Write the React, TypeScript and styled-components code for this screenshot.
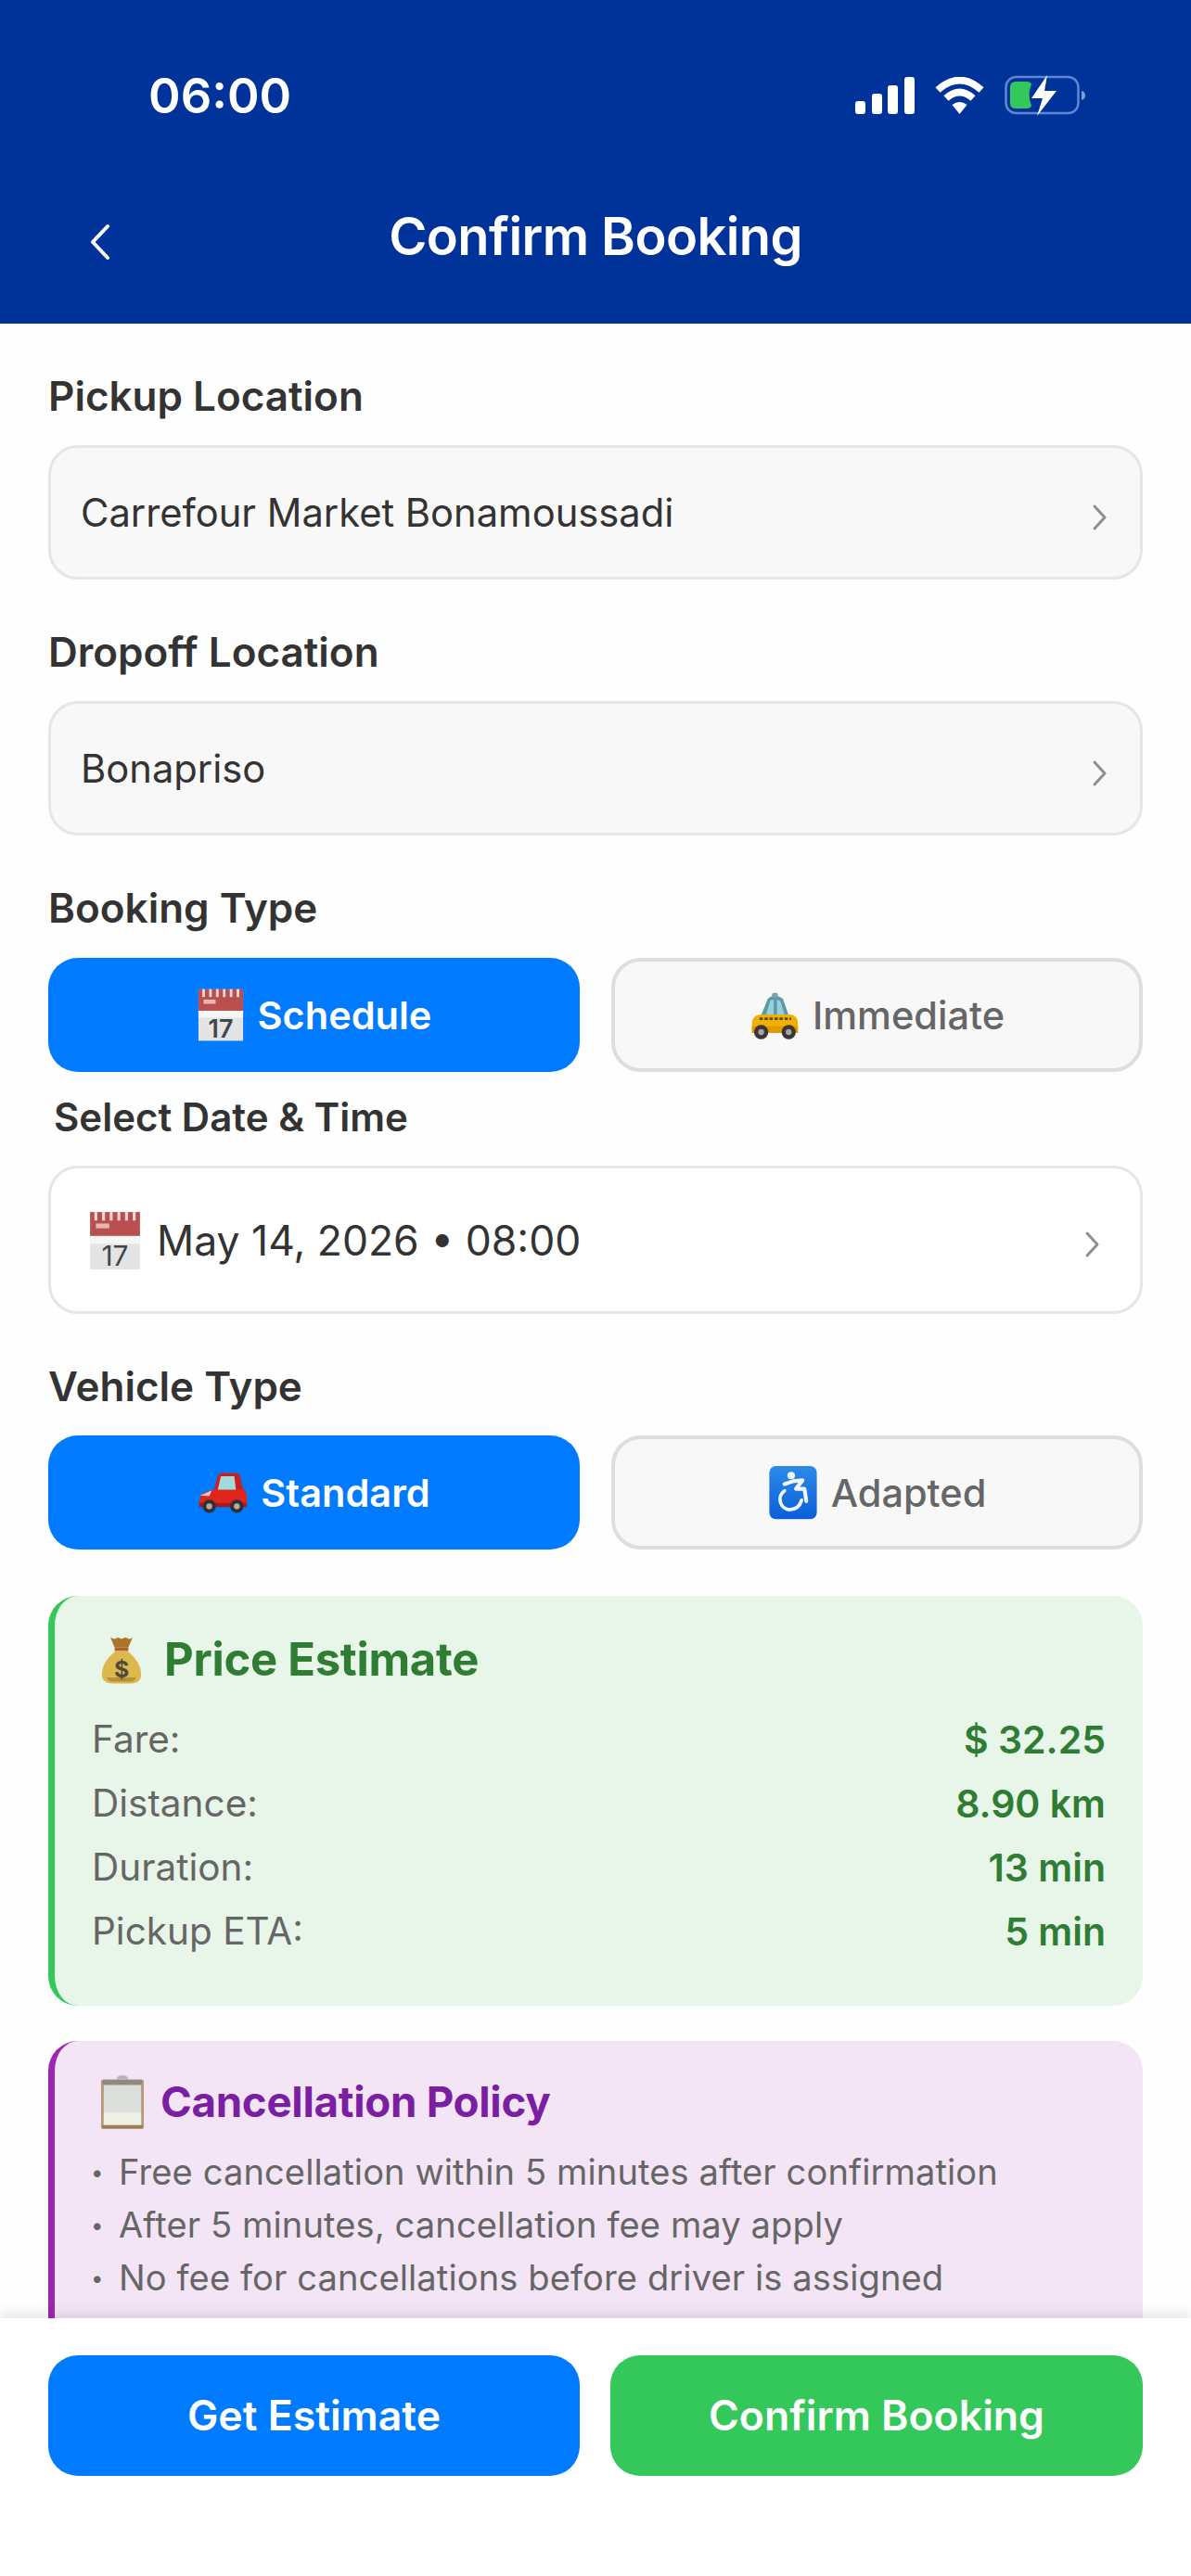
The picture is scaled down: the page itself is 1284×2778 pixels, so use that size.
import React from 'react';
import styled, { createGlobalStyle } from 'styled-components';

const Global = createGlobalStyle`
  html, body { margin: 0; padding: 0; background: #fff; }
  * { box-sizing: border-box; }
  body { font-family: Inter, "Liberation Sans", sans-serif; }
`;

const Page = styled.div`
  width: 1284px; height: 2778px; display: flex; flex-direction: column; overflow: hidden; background: #fefefe;
`;
const Header = styled.header`
  height: 349px; flex: none; background: #003399; color: #fff; display: flex; flex-direction: column;
`;
const StatusBar = styled.div`
  height: 122px; padding: 84px 112px 0 160px; display: flex; justify-content: space-between; align-items: center;
`;
const Time = styled.span`
  font-size: 52.5px; font-weight: 600; line-height: 48px;
`;
const StatusIcons = styled.div`
  display: flex; align-items: center; gap: 22px;
`;
const NavBar = styled.div`
  flex: 1; display: grid; grid-template-columns: 120px 1fr 120px; align-items: center; padding: 38px 0 0;
`;
const BackButton = styled.div`
  display: flex; justify-content: flex-end; padding-top: 12px;
`;
const Title = styled.h1`
  margin: 0; font-size: 56px; font-weight: 600; text-align: center; letter-spacing: -0.6px; line-height: 64px;
`;
const Scroll = styled.main`
  flex: 1; min-height: 0; overflow: hidden; padding: 52px 52px 0;
`;
const Label = styled.div<{ $inset?: boolean; $after?: number }>`
  font-size: ${p => (p.$inset ? 42 : 44)}px; font-weight: 600; color: #333; line-height: 52px;
  margin-bottom: ${p => p.$after ?? 27}px;
  margin-left: ${p => (p.$inset ? 6 : 0)}px;
`;
const Field = styled.div<{ $white?: boolean }>`
  height: ${p => (p.$white ? 160 : 145)}px; border-radius: 32px; border: 3px solid #e6e6e6;
  background: ${p => (p.$white ? '#fff' : '#f8f8f8')};
  display: flex; align-items: center; justify-content: space-between;
  padding: 0 ${p => (p.$white ? 45 : 37)}px 0 ${p => (p.$white ? 40 : 32)}px;
  margin-bottom: 52px;
`;
const FieldText = styled.span<{ $large?: boolean }>`
  font-size: ${p => (p.$large ? 44.5 : 41.7)}px; color: #333; font-weight: 400; display: flex; align-items: center; gap: 16px;
  padding-top: ${p => (p.$large ? 2 : 0)}px;
`;
const ToggleRow = styled.div<{ $after: number }>`
  display: grid; grid-template-columns: 573px 573px; column-gap: 34px; margin-bottom: ${p => p.$after}px;
`;
const Toggle = styled.div<{ $active?: boolean }>`
  height: 123px; border-radius: 32px; display: flex; align-items: center; justify-content: center; gap: 14px;
  font-size: 41.5px; font-weight: ${p => (p.$active ? 600 : 500)};
  background: ${p => (p.$active ? '#007aff' : '#f8f8f8')};
  color: ${p => (p.$active ? '#fff' : '#666')};
  border: ${p => (p.$active ? 'none' : '4px solid #dedede')};
`;
const InfoCard = styled.section<{ $bg: string; $accent: string; $height: number; $top: number }>`
  background: ${p => p.$bg}; border-left: 7px solid ${p => p.$accent}; border-radius: 32px;
  padding: ${p => p.$top}px 40px 0 41px; margin-bottom: 38px; height: ${p => p.$height}px;
`;
const CardTitle = styled.h2<{ $color: string; $size: number; $gap: number }>`
  margin: 0 0 0 8px; color: ${p => p.$color}; font-size: ${p => p.$size}px; font-weight: 700; line-height: 60px;
  display: flex; align-items: center; gap: ${p => p.$gap}px; letter-spacing: -0.3px;
`;
const FareRows = styled.div`
  margin-top: 31px; display: flex; flex-direction: column; gap: 19px;
`;
const FareRow = styled.div`
  display: flex; justify-content: space-between; line-height: 50px;
`;
const FareLabel = styled.span`
  color: #666; font-size: 40.5px; margin-left: -1px;
`;
const FareValue = styled.span`
  color: #2e7d32; font-weight: 600; font-size: 41px;
`;
const PolicyList = styled.div`
  margin-top: 17px; color: #666; font-size: 38.1px; line-height: 57px; letter-spacing: 0.1px; margin-left: -2px;
`;
const PolicyLine = styled.div`
  display: flex; align-items: center;
`;
const Bullet = styled.span`
  font-size: 24px; width: 30px; flex: none; line-height: 57px;
`;
const Footer = styled.footer`
  flex: none; height: 278px; background: #fff; padding: 40px 52px 0; display: grid;
  grid-template-columns: 573px 574px; column-gap: 33px; align-content: start; position: relative;
  box-shadow: 0 -6px 12px rgba(0, 0, 0, 0.09);
`;
const ActionButton = styled.div<{ $bg: string }>`
  height: 130px; border-radius: 32px; background: ${p => p.$bg}; color: #fff; font-size: 44.6px; font-weight: 600;
  display: flex; align-items: center; justify-content: center;
`;
const Glyph = styled.svg`
  flex: none;
`;
const ChevronGlyph = styled.svg`
  flex: none; margin: 10px -3px 0 0;
`;

const Chevron = () => (
  <ChevronGlyph width={18} height={30} viewBox="0 0 18 30" fill="none">
    <path d="M3 3l11 12L3 27" stroke="#8e8e93" strokeWidth="3" strokeLinecap="round" strokeLinejoin="round" />
  </ChevronGlyph>
);

const Calendar = ({ size }: { size: number }) => (
  <Glyph width={size} height={size * 1.14} viewBox="0 0 56 64">
    <rect x="2" y="2" width="52" height="60" fill="#e4e4e4" />
    <rect x="2" y="2" width="52" height="25" fill="#b9504f" />
    <path d="M8 2v9M16 2v9M24 2v9M32 2v9M40 2v9M48 2v9" stroke="#f4d9d6" strokeWidth="3" />
    <rect x="8" y="14" width="14" height="5" fill="#e7b6b0" />
    <rect x="2" y="27" width="52" height="8" fill="#f6f6f6" />
    <text x="28" y="58" textAnchor="middle" fontFamily="Inter, sans-serif" fontSize="29" fill="#3f474d">17</text>
  </Glyph>
);
const Taxi = ({ size }: { size: number }) => (
  <Glyph width={size} height={size} viewBox="0 0 60 60">
    <path d="M14 30 L22 10 Q30 3 40 10 L47 30 Z" fill="#5d9aa8" />
    <path d="M25 12L20 29h9V11zM33 11v18h9l-5-16z" fill="#97cfdc" />
    <rect x="27" y="3" width="7" height="6" rx="2" fill="#7da0ab" />
    <path d="M3 40q0-10 10-11h36q9 1 9 11v11H3z" fill="#f2b100" />
    <path d="M3 43h55v8H3z" fill="#e39a00" />
    <path d="M12 34h38" stroke="#5b4a12" strokeWidth="3" strokeDasharray="4 2" />
    <circle cx="14" cy="50" r="8.5" fill="#3b3635" /><circle cx="14" cy="50" r="3.5" fill="#a9a6a2" />
    <circle cx="47" cy="50" r="8.5" fill="#3b3635" /><circle cx="47" cy="50" r="3.5" fill="#a9a6a2" />
  </Glyph>
);
const RedCar = ({ size }: { size: number }) => (
  <Glyph width={size} height={size} viewBox="0 0 60 52">
    <path d="M19 24 L24 6 Q25 2 30 2 H46 Q50 2 51 6 L55 24 Z" fill="#c92121" />
    <path d="M24 23 L28 6 H44 L46 23 Z" fill="#a3dadb" />
    <path d="M2 36q0-9 10-12l10-2h34q3 2 3 10v10H2z" fill="#e0251c" />
    <path d="M3 29l14-6-3 7z" fill="#f2c3bf" />
    <path d="M2 38h57v5H2z" fill="#a81c18" />
    <circle cx="14" cy="42" r="8" fill="#33302f" /><circle cx="14" cy="42" r="3.5" fill="#b5aaa5" />
    <circle cx="47" cy="42" r="8" fill="#33302f" /><circle cx="47" cy="42" r="3.5" fill="#b5aaa5" />
  </Glyph>
);
const Wheelchair = ({ size }: { size: number }) => (
  <Glyph width={size} height={size * 1.1} viewBox="0 0 52 58">
    <defs>
      <linearGradient id="wc" x1="0" y1="0" x2="0" y2="1">
        <stop offset="0" stopColor="#2c8be8" /><stop offset="1" stopColor="#0a5fd8" />
      </linearGradient>
    </defs>
    <rect x="1" y="1" width="50" height="56" rx="7" fill="url(#wc)" />
    <circle cx="24" cy="11" r="4" fill="#f1f6ff" />
    <path d="M17 20l9-3 10-1-7 9 9 0 2 13" fill="none" stroke="#f1f6ff" strokeWidth="4" strokeLinejoin="round" strokeLinecap="round" />
    <path d="M35 37q-3 10-13 10a11 11 0 0 1-5-20" fill="none" stroke="#f1f6ff" strokeWidth="3.6" strokeLinecap="round" />
  </Glyph>
);
const MoneyBag = ({ size }: { size: number }) => (
  <Glyph width={size} height={size * 1.16} viewBox="0 0 50 58">
    <path d="M12 3q5 3 7 1t6 1q4-3 7-1t6-1l-5 12H17z" fill="#a9762c" />
    <path d="M17 15h16v4H17z" fill="#b5602c" />
    <path d="M18 19 Q2 32 2 46 Q2 57 14 57 H36 Q48 57 48 46 Q48 32 32 19Z" fill="#dcb84f" />
    <path d="M8 50q1 5 7 5h20q6 0 7-5z" fill="#b9903a" />
    <text x="25" y="50" textAnchor="middle" fontFamily="Inter, sans-serif" fontWeight="700" fontSize="27" fill="#4d4a3a">$</text>
  </Glyph>
);
const Clipboard = ({ size }: { size: number }) => (
  <Glyph width={size} height={size * 1.22} viewBox="0 0 50 61">
    <path d="M3 5h44q2 0 2 2v51q0 2-2 2H3q-2 0-2-2V7q0-2 2-2z" fill="#b69a79" />
    <rect x="4" y="9" width="42" height="47" fill="#dcdfdc" />
    <rect x="4" y="42" width="42" height="14" fill="#eef0e6" />
    <path d="M3 5h44v6H3z" fill="#8f8a80" />
    <path d="M18 5q1-5 7-5t7 5z" fill="#b8b5b4" />
    <rect x="2" y="56" width="46" height="4" fill="#a0805c" />
  </Glyph>
);

const SignalIcon = () => (
  <Glyph width="64" height="40" viewBox="0 0 64 40" fill="#fff">
    <rect x="0" y="26" width="11" height="14" rx="3" />
    <rect x="18" y="18" width="11" height="22" rx="3" />
    <rect x="35" y="9" width="11" height="31" rx="3" />
    <rect x="53" y="0" width="11" height="40" rx="3" />
  </Glyph>
);
const WifiIcon = () => (
  <Glyph width="53" height="40" viewBox="0 0 53 40" fill="none" stroke="#fff">
    <path d="M3 14 Q26.5 -7 50 14" strokeWidth="7.5" />
    <path d="M12 23 Q26.5 10 41 23" strokeWidth="7.5" />
    <path d="M18.5 30 L26.5 40 L34.5 30 Q26.5 24 18.5 30Z" fill="#fff" strokeWidth="0" />
  </Glyph>
);
const BatteryIcon = () => (
  <Glyph width="89" height="44" viewBox="0 0 89 44" fill="none">
    <rect x="1.5" y="2" width="78" height="39" rx="11" stroke="#5f86d2" strokeWidth="2.5" />
    <path d="M12 7h12q4 0 5 3-5 11 0 23-1 3-5 3H12q-6 0-6-6V13q0-6 6-6z" fill="#34c759" />
    <path d="M46 0L29 25h12l-6 19 21-27H43z" fill="#fff" />
    <path d="M83 17q4 1 4 5t-4 5z" fill="#7f9ed8" />
  </Glyph>
);

export default function App() {
  return (
    <Page>
      <Global />
      <Header>
        <StatusBar>
          <Time>06:00</Time>
          <StatusIcons><SignalIcon /><WifiIcon /><BatteryIcon /></StatusIcons>
        </StatusBar>
        <NavBar>
          <BackButton>
            <Glyph width="24" height="40" viewBox="0 0 24 40" fill="none">
              <path d="M20 3L4 20l16 17" stroke="#fff" strokeWidth="4" strokeLinecap="round" strokeLinejoin="round" />
            </Glyph>
          </BackButton>
          <Title>Confirm Booking</Title>
          <span />
        </NavBar>
      </Header>
      <Scroll>
        <Label>Pickup Location</Label>
        <Field>
          <FieldText>Carrefour Market Bonamoussadi</FieldText>
          <Chevron />
        </Field>
        <Label>Dropoff Location</Label>
        <Field>
          <FieldText>Bonapriso</FieldText>
          <Chevron />
        </Field>
        <Label $after={28}>Booking Type</Label>
        <ToggleRow $after={23}>
          <Toggle $active><Calendar size={52} />Schedule</Toggle>
          <Toggle><Taxi size={54} />Immediate</Toggle>
        </ToggleRow>
        <Label $inset $after={26}>Select Date &amp; Time</Label>
        <Field $white>
          <FieldText $large><Calendar size={58} />May 14, 2026 • 08:00</FieldText>
          <Chevron />
        </Field>
        <Label>Vehicle Type</Label>
        <ToggleRow $after={50}>
          <Toggle $active><RedCar size={54} />Standard</Toggle>
          <Toggle><Wheelchair size={54} />Adapted</Toggle>
        </ToggleRow>
        <InfoCard $bg="#e8f5e9" $accent="#34c759" $height={442} $top={39}>
          <CardTitle $color="#2e7d32" $size={49} $gap={23}><MoneyBag size={46} />Price Estimate</CardTitle>
          <FareRows>
            <FareRow><FareLabel>Fare:</FareLabel><FareValue>$ 32.25</FareValue></FareRow>
            <FareRow><FareLabel>Distance:</FareLabel><FareValue>8.90 km</FareValue></FareRow>
            <FareRow><FareLabel>Duration:</FareLabel><FareValue>13 min</FareValue></FareRow>
            <FareRow><FareLabel>Pickup ETA:</FareLabel><FareValue>5 min</FareValue></FareRow>
          </FareRows>
        </InfoCard>
        <InfoCard $bg="#f3e5f5" $accent="#9c27b0" $height={400} $top={36}>
          <CardTitle $color="#7b1fa2" $size={45.7} $gap={17}><Clipboard size={48} />Cancellation Policy</CardTitle>
          <PolicyList>
            <PolicyLine><Bullet>•</Bullet>Free cancellation within 5 minutes after confirmation</PolicyLine>
            <PolicyLine><Bullet>•</Bullet>After 5 minutes, cancellation fee may apply</PolicyLine>
            <PolicyLine><Bullet>•</Bullet>No fee for cancellations before driver is assigned</PolicyLine>
          </PolicyList>
        </InfoCard>
      </Scroll>
      <Footer>
        <ActionButton $bg="#007aff">Get Estimate</ActionButton>
        <ActionButton $bg="#34c759">Confirm Booking</ActionButton>
      </Footer>
    </Page>
  );
}
